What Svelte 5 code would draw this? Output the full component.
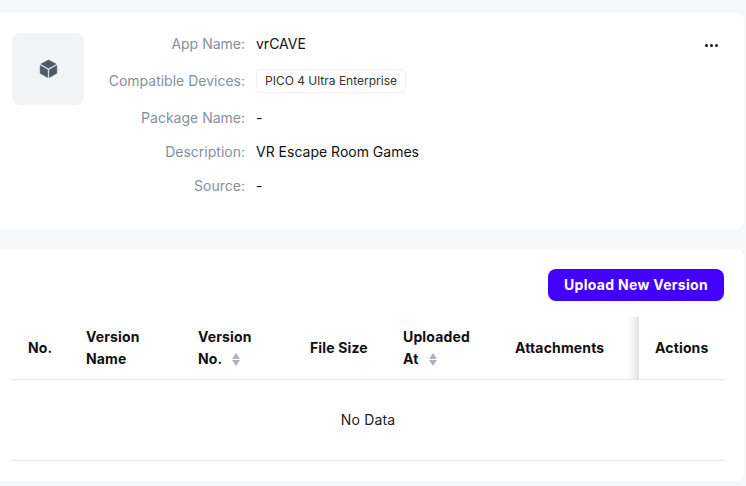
<script>
    const rows = [
        { label: 'App Name', value: 'vrCAVE' },
        { label: 'Compatible Devices', tag: 'PICO 4 Ultra Enterprise' },
        { label: 'Package Name', value: '-' },
        { label: 'Description', value: 'VR Escape Room Games' },
        { label: 'Source', value: '-' }
    ]

    const columns = [
        { key: 'no', title: 'No.' },
        { key: 'name', title: 'Version Name' },
        { key: 'version', title: 'Version No.', sortable: true },
        { key: 'size', title: 'File Size' },
        { key: 'uploaded', title: 'Uploaded At', sortable: true },
        { key: 'attachments', title: 'Attachments' },
        { key: 'actions', title: 'Actions' }
    ]
</script>

<div class="page">
    <section class="card info">
        <div class="app-icon">
            <svg viewBox="0 0 16 16" width="19" height="19" fill="#4e5969" stroke="#4e5969" stroke-width="0.5" stroke-linejoin="round">
                <path d="M8 0.8 14.4 4.3 8 7.8 1.6 4.3Z" />
                <path d="M1 5.5 7.3 9V15.6L1 12.1Z" />
                <path d="M15 5.5 8.7 9V15.6L15 12.1Z" />
            </svg>
        </div>
        <dl class="details">
            {#each rows as row}
                <dt>{row.label}:</dt>
                <dd>
                    {#if row.tag}
                        <span class="tag">{row.tag}</span>
                    {:else}
                        {row.value}
                    {/if}
                </dd>
            {/each}
        </dl>
        <button class="more" type="button" aria-label="More">
            <span></span><span></span><span></span>
        </button>
    </section>

    <section class="card versions">
        <div class="toolbar">
            <button class="upload" type="button">Upload New Version</button>
        </div>
        <table>
            <thead>
                <tr>
                    {#each columns as col}
                        <th class={col.key}>
                            <div class="title">
                                {col.title}
                                {#if col.sortable}
                                    <span class="sorter">
                                        <i class="up"></i>
                                        <i class="down"></i>
                                    </span>
                                {/if}
                            </div>
                        </th>
                    {/each}
                </tr>
            </thead>
            <tbody>
                <tr>
                    <td class="empty" colspan={columns.length}>No Data</td>
                </tr>
            </tbody>
        </table>
    </section>
</div>

<style>
    :global(body) {
        background: #f6f7f9;
    }

    .page {
        width: 744px;
        padding: 13px 0 5px;
        display: flex;
        flex-direction: column;
        gap: 20px;
        font-family: Inter, "Noto Sans", sans-serif;
        font-size: 14px;
        color: #111;
    }

    .card {
        background: #fff;
        border-radius: 0 8px 8px 0;
    }

    .info {
        position: relative;
        display: flex;
        padding: 20px 12px 32px;
        gap: 12px;
    }

    .app-icon {
        width: 72px;
        height: 72px;
        flex: none;
        background: #f2f3f5;
        border-radius: 8px;
        display: flex;
        align-items: center;
        justify-content: center;
    }

    .app-icon svg {
        margin-bottom: 1px;
    }

    .details {
        margin: 0;
        display: grid;
        grid-template-columns: 149px auto;
        grid-template-rows: 22px 28px 22px 22px 22px;
        column-gap: 11px;
        row-gap: 12px;
        align-items: center;
        justify-content: start;
        line-height: 22px;
    }

    dt {
        text-align: right;
        color: #86909c;
    }

    dd {
        margin: 0;
    }

    .tag {
        display: inline-block;
        height: 24px;
        box-sizing: border-box;
        padding: 0 8px;
        border: 1px solid #f0f1f3;
        border-radius: 4px;
        font-size: 12px;
        line-height: 22px;
        color: #333;
        vertical-align: middle;
    }

    .more {
        position: absolute;
        top: 24px;
        right: 26px;
        display: flex;
        gap: 2px;
        padding: 0;
        border: 0;
        background: none;
        height: 16px;
        align-items: center;
    }

    .more span {
        width: 3px;
        height: 3px;
        border-radius: 50%;
        background: #111;
    }

    .versions {
        padding: 20px 20px 20px 12px;
    }

    .toolbar {
        display: flex;
        justify-content: flex-end;
        margin-bottom: 16px;
    }

    .upload {
        width: 176px;
        height: 32px;
        padding: 0 0 2px;
        border: 0;
        border-radius: 8px;
        background: #4400ff;
        color: #fff;
        font: 700 14px Inter, "Noto Sans", sans-serif;
        letter-spacing: 0.3px;
    }

    table {
        width: 712px;
        table-layout: fixed;
        border-collapse: collapse;
    }

    th {
        position: relative;
        box-sizing: border-box;
        height: 62px;
        padding: 0 16px;
        text-align: left;
        font-weight: 700;
        line-height: 22px;
        letter-spacing: 0.15px;
        color: #111;
        border-bottom: 1px solid #e5e6eb;
    }

    .title {
        width: 72px;
    }

    th.size .title, th.attachments .title, th.actions .title {
        width: auto;
    }

    th.no { width: 58px; }
    th.name, th.version, th.uploaded { width: 112px; }
    th.size { width: 93px; }
    th.attachments { width: 140px; }
    th.actions { width: 85px; }

    th.actions::before {
        content: '';
        position: absolute;
        left: -10px;
        top: 0;
        bottom: 0;
        width: 10px;
        background: linear-gradient(to right, rgba(0, 0, 0, 0), rgba(0, 0, 0, 0.12));
    }

    .sorter {
        display: inline-flex;
        flex-direction: column;
        gap: 1px;
        margin-left: 7px;
        vertical-align: middle;
    }

    .sorter i {
        display: block;
        width: 0;
        height: 0;
        border-left: 4px solid transparent;
        border-right: 4px solid transparent;
    }

    .sorter .up {
        border-bottom: 6px solid #b0b3bd;
    }

    .sorter .down {
        border-top: 6px solid #b0b3bd;
    }

    .empty {
        height: 81px;
        box-sizing: border-box;
        padding: 0;
        text-align: center;
        color: #222;
        letter-spacing: 0.15px;
        border-bottom: 1px solid #e5e6eb;
    }
</style>
